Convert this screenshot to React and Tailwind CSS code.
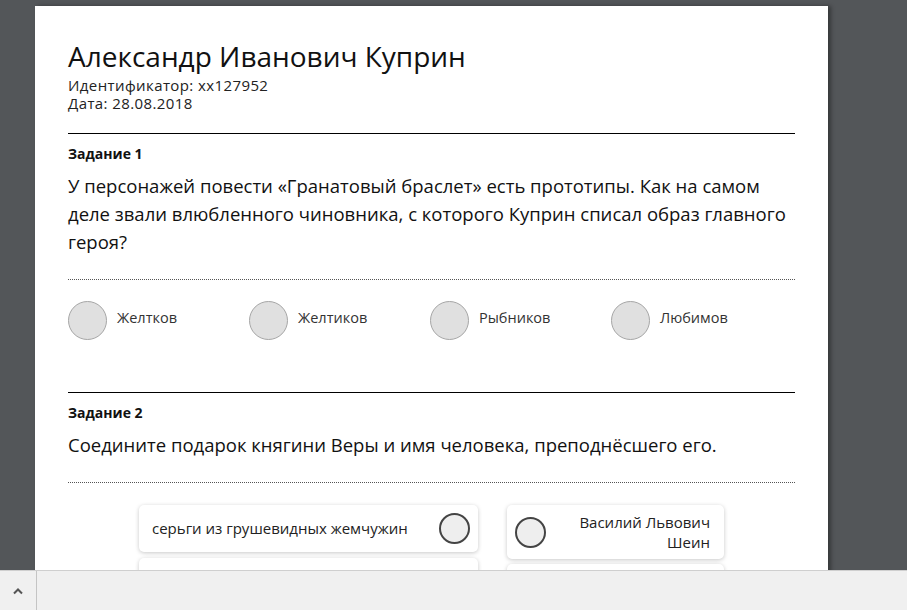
const options = ["Желтков", "Желтиков", "Рыбников", "Любимов"];

export default function App() {
  return (
    <div
      className="flex h-[610px] w-[907px] flex-col overflow-hidden bg-[#535659]"
      style={{ fontFamily: '"Open Sans", "Noto Sans", sans-serif' }}
    >
      <div className="flex-1 overflow-hidden pl-[35px] pt-[6px]">
        <div className="w-[793px] bg-white px-[33px] pt-[32px] pb-10 text-[#111] shadow-[3px_0_4px_rgba(0,0,0,0.35)]">
          {/* Header */}
          <h1 className="text-[28px] leading-[36px] text-[#111]">Александр Иванович Куприн</h1>
          <div className="mt-[2px] text-[15px] leading-[18px] tracking-[0.4px] text-[#222]">Идентификатор: xx127952</div>
          <div className="text-[15px] leading-[18px] tracking-[0.4px] text-[#222]">Дата: 28.08.2018</div>

          {/* Task 1 */}
          <div className="mt-[21px] border-t border-black pt-[10px]">
            <div className="text-[14px] font-bold leading-[20px]">Задание 1</div>
            <p className="mt-[8px] text-[18.5px] leading-[28px] text-[#111]">
              У персонажей повести «Гранатовый браслет» есть прототипы. Как на самом деле звали влюбленного чиновника, с которого Куприн списал образ главного героя?
            </p>
          </div>
          <div className="mt-[23px] border-t border-dotted border-[#555]" />
          <div className="mt-[21px] flex">
            {options.map((o) => (
              <div key={o} className="flex w-[181px] items-center">
                <span className="h-[39px] w-[39px] shrink-0 rounded-full border border-[#a6a6a6] bg-[#e0e0e0]" />
                <span className="ml-[10px] pb-[5px] text-[14.5px] text-[#333]">{o}</span>
              </div>
            ))}
          </div>

          {/* Task 2 */}
          <div className="mt-[52px] border-t border-black pt-[10px]">
            <div className="text-[14px] font-bold leading-[20px]">Задание 2</div>
            <p className="mt-[8px] text-[18.5px] leading-[28px] text-[#111]">
              Соедините подарок княгини Веры и имя человека, преподнёсшего его.
            </p>
          </div>
          <div className="mt-[23px] border-t border-dotted border-[#555]" />

          <div className="mt-[22px] flex justify-center gap-[29px]">
            <div className="flex w-[339px] flex-col gap-[6px]">
              <div className="flex h-[47px] items-center justify-between rounded-[5px] bg-white pl-[13px] pr-[8px] shadow-[0_1px_4px_rgba(0,0,0,0.22)]">
                <span className="text-[15px] text-[#222]">серьги из грушевидных жемчужин</span>
                <span className="h-[31px] w-[31px] rounded-full border-2 border-[#444] bg-[#eeeeee]" />
              </div>
              <div className="h-[47px] rounded-[5px] bg-white shadow-[0_1px_4px_rgba(0,0,0,0.22)]" />
            </div>
            <div className="flex w-[217px] flex-col gap-[5px]">
              <div className="flex h-[54px] items-center justify-between rounded-[5px] bg-white pl-[8px] pr-[14px] shadow-[0_1px_4px_rgba(0,0,0,0.22)]">
                <span className="h-[31px] w-[31px] shrink-0 rounded-full border-2 border-[#444] bg-[#eeeeee]" />
                <span className="text-right text-[15px] leading-[20px] text-[#222]">
                  Василий Львович
                  <br />
                  Шеин
                </span>
              </div>
              <div className="h-[47px] rounded-[5px] bg-white shadow-[0_1px_4px_rgba(0,0,0,0.22)]" />
            </div>
          </div>
        </div>
      </div>

      {/* Bottom bar */}
      <div className="flex h-[40px] shrink-0 border-t border-[#cfcfcf] bg-[#f0f0f0]">
        <div className="flex w-[37px] items-center justify-center border-r border-[#c4c4c4]">
          <svg width="12" height="8" viewBox="0 0 12 8" fill="none" stroke="#555" strokeWidth="2">
            <path d="M2 6.5L6 2.5L10 6.5" />
          </svg>
        </div>
      </div>
    </div>
  );
}
